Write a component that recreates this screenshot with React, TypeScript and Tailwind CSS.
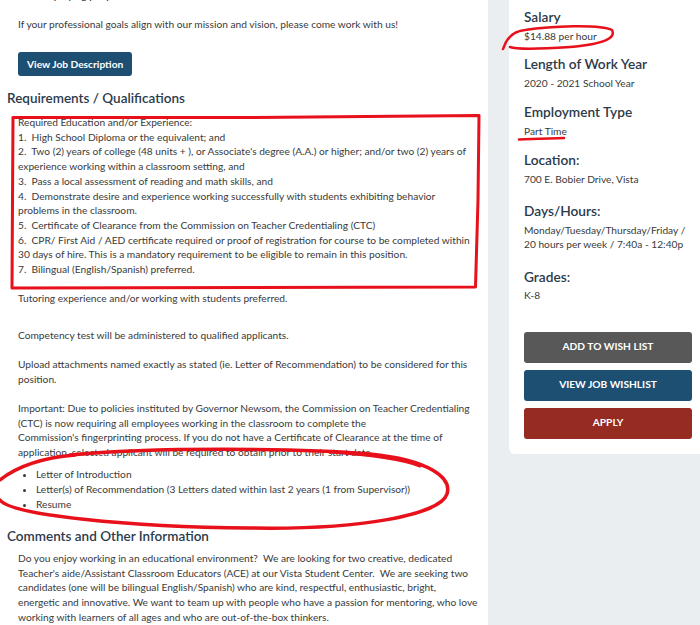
import React from "react";

const body = "text-[10.2px] leading-[14.7px] text-[#3a3a3a]";
const h3 = "text-[13.7px] leading-[20px] font-semibold text-[#2b3a4a]";

export default function App() {
  return (
    <div
      className="relative flex w-[700px] h-[625px] overflow-hidden bg-white"
      style={{ fontFamily: "Lato, 'Open Sans', sans-serif" }}
    >
      {/* Left column */}
      <div className="w-[488px] shrink-0 pl-[18px] pr-[10px]">
        <p className={`${body} -mt-[12px] pl-[22px] font-semibold`}>employing people</p>
        <p className={`${body} mt-[14px]`}>
          If your professional goals align with our mission and vision, please come work with us!
        </p>
        <button className="mt-[21px] h-[24px] px-[9px] rounded-[3px] bg-[#1d4f73] text-white text-[10.2px] font-bold">
          View Job Description
        </button>
        <h2 className="-ml-[11px] mt-[12px] text-[13.5px] leading-[20px] font-semibold text-[#2b3a4a]">
          Requirements / Qualifications
        </h2>
        <div className={`${body} mt-[6.6px]`}>
          <div>Required Education and/or Experience:</div>
          <div>1.&nbsp; High School Diploma or the equivalent; and</div>
          <div>
            2.&nbsp; Two (2) years of college (48 units + ), or Associate's degree (A.A.) or higher; and/or two (2) years of
            experience working within a classroom setting, and
          </div>
          <div>3.&nbsp; Pass a local assessment of reading and math skills, and</div>
          <div>
            4.&nbsp; Demonstrate desire and experience working successfully with students exhibiting behavior problems in the
            classroom.
          </div>
          <div>5.&nbsp; Certificate of Clearance from the Commission on Teacher Credentialing (CTC)</div>
          <div>
            6.&nbsp; CPR/ First Aid / AED certificate required or proof of registration for course to be completed within 30
            days of hire. This is a mandatory requirement to be eligible to remain in this position.
          </div>
          <div>7.&nbsp; Bilingual (English/Spanish) preferred.</div>
        </div>
        <p className={`${body} mt-[14.5px]`}>Tutoring experience and/or working with students preferred.</p>
        <p className={`${body} mt-[22.3px]`}>Competency test will be administered to qualified applicants.</p>
        <p className={`${body} mt-[14.3px]`}>
          Upload attachments named exactly as stated (ie. Letter of Recommendation) to be considered for this position.
        </p>
        <p className={`${body} mt-[14.3px]`}>
          Important: Due to policies instituted by Governor Newsom, the Commission on Teacher Credentialing (CTC) is now
          requiring all employees working in the classroom to complete the
          <br />
          Commission's fingerprinting process. If you do not have a Certificate of Clearance at the time of application,
          selected applicant will be required to obtain prior to their start date.
        </p>
        <ul className={`${body} mt-[7.6px] pl-[18px] list-disc`}>
          <li>Letter of Introduction</li>
          <li>Letter(s) of Recommendation (3 Letters dated within last 2 years (1 from Supervisor))</li>
          <li>Resume</li>
        </ul>
        <h2 className="-ml-[11px] mt-[15px] text-[13.5px] leading-[20px] font-semibold text-[#2b3a4a]">
          Comments and Other Information
        </h2>
        <p className={`${body} mt-[4.6px]`}>
          Do you enjoy working in an educational environment?&nbsp; We are looking for two creative, dedicated Teacher's
          aide/Assistant Classroom Educators (ACE) at our Vista Student Center.&nbsp; We are seeking two candidates (one
          will be bilingual English/Spanish) who are kind, respectful, enthusiastic, bright, energetic and innovative. We
          want to team up with people who have a passion for mentoring, who love working with learners of all ages and who
          are out-of-the-box thinkers.
        </p>
      </div>

      {/* Right column */}
      <div className="flex-1 bg-[#ebeef0] pl-[21px]">
        <div className="bg-white rounded-bl-[6px] pl-[15px] pr-[8px] pt-[7px] pb-[15px]">
          <h3 className={h3}>Salary</h3>
          <p className={`${body} mt-[1.6px]`}>$14.88 per hour</p>
          <h3 className={`mt-[10.7px] ${h3}`}>Length of Work Year</h3>
          <p className={`${body} mt-[1.6px]`}>2020 - 2021 School Year</p>
          <h3 className={`mt-[11.7px] ${h3}`}>Employment Type</h3>
          <p className={`${body} mt-[1.6px]`}>Part Time</p>
          <h3 className={`mt-[11.7px] ${h3}`}>Location:</h3>
          <p className={`${body} mt-[1.6px]`}>700 E. Bobier Drive, Vista</p>
          <h3 className={`mt-[14.7px] ${h3}`}>Days/Hours:</h3>
          <p className={`${body} mt-[1.6px]`}>
            Monday/Tuesday/Thursday/Friday /<br />
            20 hours per week / 7:40a - 12:40p
          </p>
          <h3 className={`mt-[14.7px] ${h3}`}>Grades:</h3>
          <p className={`${body} mt-[1.6px]`}>K-8</p>
          <div className="mt-[28.7px] flex flex-col gap-[7px]">
            <button className="h-[31px] rounded-[3px] bg-[#585858] text-white text-[10.2px] font-bold">
              ADD TO WISH LIST
            </button>
            <button className="h-[31px] rounded-[3px] bg-[#1d4f73] text-white text-[10.2px] font-bold">
              VIEW JOB WISHLIST
            </button>
            <button className="h-[31px] rounded-[3px] bg-[#962b22] text-white text-[10.2px] font-bold">APPLY</button>
          </div>
        </div>
      </div>

      {/* Red annotations */}
      <svg
        className="absolute left-0 top-0 pointer-events-none"
        width="700"
        height="625"
        viewBox="0 0 700 625"
        fill="none"
        stroke="#e8101a"
        strokeLinecap="round"
        strokeLinejoin="round"
      >
        <path
          d="M13 117.5 L245 117.5 L479 115.5 L478 200 L475.5 287 L12 288 L12.5 200 L13 117.5"
          strokeWidth="3"
        />
        <path
          d="M70 455 C150 447 300 448 370 454 C430 460 452 478 447 494 C440 515 360 530 250 528 C130 527 10 515 0 500"
          strokeWidth="3.5"
        />
        <path d="M0 480 C15 468 40 458 75 455" strokeWidth="3.5" />
        <path d="M330 452 C360 454 400 458 420 466" strokeWidth="3" />
        <path
          d="M503 49 L506 42 C510 35 515 31 525 30 C550 26 600 24 612 30 C616 38 605 44 570 47 C540 49 518 50 510 47"
          strokeWidth="2.5"
        />
        <path d="M519 139.5 C535 138.5 550 138.5 564 138" strokeWidth="2.5" />
      </svg>
    </div>
  );
}
